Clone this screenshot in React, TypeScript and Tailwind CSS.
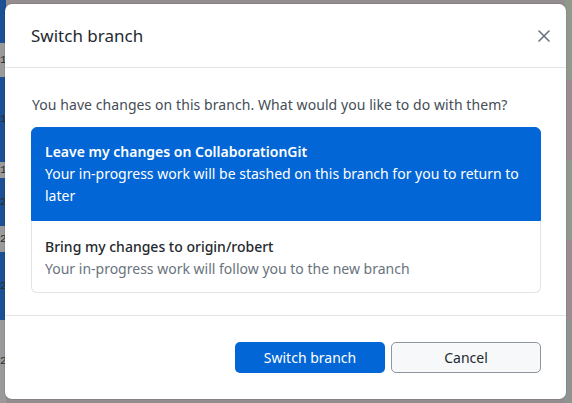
import React, { useState } from "react";

const leftStrip = [
  { h: "h-[43px]", c: "bg-[#1c5094]", t: "" },
  { h: "h-[34px]", c: "bg-[#9a9a9a]", t: "1" },
  { h: "h-[85px]", c: "bg-[#1c5094]", t: "1" },
  { h: "h-[16px]", c: "bg-[#9a9a9a]", t: "1" },
  { h: "h-[48px]", c: "bg-[#1c5094]", t: "2" },
  { h: "h-[26px]", c: "bg-[#9a9a9a]", t: "2" },
  { h: "h-[68px]", c: "bg-[#1c5094]", t: "2" },
  { h: "h-[83px]", c: "bg-[#9a9a9a]", t: "2" },
];

const App: React.FC = () => {
  const [choice, setChoice] = useState<"stash" | "bring">("stash");

  return (
    <div
      className="relative flex w-[572px] h-[403px] overflow-hidden bg-[#938d8f]"
      style={{ fontFamily: '"Noto Sans", "Open Sans", sans-serif' }}
    >
      {/* page behind the dim backdrop */}
      <div className="flex flex-col w-[6px]">
        {leftStrip.map((s, i) => (
          <div key={i} className={`${s.h} ${s.c} flex items-center text-[11px] leading-none text-[#2b2b2b] font-mono`}>
            {s.t}
          </div>
        ))}
      </div>
      <div className="flex-1" />
      <div className="flex flex-col w-[7px]">
        <div className="h-[80px] bg-[#8f9a8d]" />
        <div className="h-[80px] bg-[#998d92]" />
        <div className="h-[80px] bg-[#8f9a8d]" />
        <div className="h-[80px] bg-[#998d92]" />
        <div className="flex-1 bg-[#8f938f]" />
      </div>

      {/* dialog */}
      <div className="absolute left-[5px] top-[4px] w-[561px] h-[395px] flex flex-col bg-white rounded-[7px] shadow-[0_0_0_1px_rgba(0,0,0,0.08)]">
        <div className="flex items-center justify-between h-[64px] pl-[26px] pr-[15px] border-b border-[#e1e4e8]">
          <h1 className="text-[17px] text-[#24292e] font-normal">Switch branch</h1>
          <button className="w-[14px] h-[14px] flex items-center justify-center text-[#6a737d]">
            <svg width="12" height="12" viewBox="0 0 12 12" fill="none" stroke="currentColor" strokeWidth="1.6" strokeLinecap="round">
              <line x1="1" y1="1" x2="11" y2="11" />
              <line x1="11" y1="1" x2="1" y2="11" />
            </svg>
          </button>
        </div>

        <div className="flex flex-col flex-1 px-[26px] pt-[26px] border-b border-[#e1e4e8]">
          <p className="text-[14px] leading-[22px] text-[#444d56] pl-[1px] tracking-[0.07px]">
            You have changes on this branch. What would you like to do with them?
          </p>
          <div className="mt-[11px] flex flex-col w-[510px]">
            <button
              onClick={() => setChoice("stash")}
              className={`text-left px-[13px] pt-[13px] pb-[13px] rounded-t-[6px] border ${
                choice === "stash" ? "bg-[#0366d6] border-[#0366d6] text-white" : "bg-white border-[#e1e4e8] text-[#24292e]"
              }`}
            >
              <div className="text-[14px] leading-[22px] font-semibold">Leave my changes on CollaborationGit</div>
              <div className="text-[14px] leading-[22px]">
                Your in-progress work will be stashed on this branch for you to return to later
              </div>
            </button>
            <button
              onClick={() => setChoice("bring")}
              className={`text-left px-[13px] pt-[14px] pb-[12px] rounded-b-[6px] border border-t-0 ${
                choice === "bring" ? "bg-[#0366d6] border-[#0366d6] text-white" : "bg-white border-[#e1e4e8] text-[#24292e]"
              }`}
            >
              <div className="text-[14px] leading-[23px] font-medium">Bring my changes to origin/robert</div>
              <div className={`text-[14px] leading-[22px] ${choice === "bring" ? "text-white" : "text-[#6a737d]"}`}>
                Your in-progress work will follow you to the new branch
              </div>
            </button>
          </div>
        </div>

        <div className="flex items-center justify-end gap-[6px] h-[83px] px-[25px]">
          <button className="w-[150px] h-[31px] rounded-[5px] bg-[#0366d6] text-white text-[14px]">Switch branch</button>
          <button className="w-[150px] h-[31px] rounded-[5px] bg-[#f6f8fa] border border-[#8e959c] text-[#24292e] text-[14px]">
            Cancel
          </button>
        </div>
      </div>
    </div>
  );
};

export default App;
